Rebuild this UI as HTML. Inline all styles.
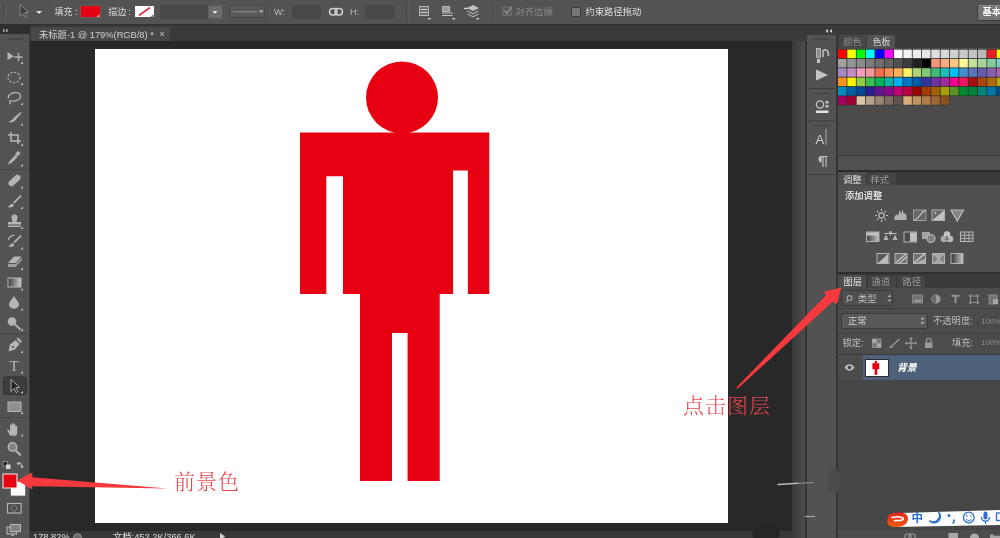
<!DOCTYPE html>
<html lang="zh-CN">
<head>
<meta charset="utf-8">
<title>Photoshop</title>
<style>
html,body{margin:0;padding:0;}
body{width:1000px;height:538px;overflow:hidden;background:#282828;position:relative;
 font-family:"Liberation Sans","Noto Sans CJK SC",sans-serif;font-size:9.3px;color:#dcdcdc;}
.a{position:absolute;}
.t{position:absolute;white-space:nowrap;line-height:12px;height:12px;}
.dim{color:#8c8c8c;}
.mid{color:#bdbdbd;}
#opt{left:0;top:0;width:1000px;height:25px;background:#535353;border-bottom:1px solid #2e2e2e;box-sizing:border-box;}
#tabs{left:0;top:25px;width:1000px;height:16px;background:#3a3a3a;}
#tool{left:0;top:25px;width:30px;height:513px;background:#535353;border-right:1px solid #3c3c3c;box-sizing:border-box;}
#toolhd{left:0;top:25px;width:30px;height:9px;background:#2f2f2f;}
#doctab{left:31px;top:26.5px;width:138.5px;height:14px;background:#484848;}
#canvas{left:95px;top:49px;width:633px;height:474px;background:#fff;}
#vscroll{left:792px;top:41px;width:15px;height:497px;background:linear-gradient(to right,#393939 0,#434343 45%,#4b4b4b 85%,#343434 90%,#343434 100%);}
#status{left:30px;top:530.5px;width:762px;height:8px;background:#383838;}
#strip{left:807px;top:35px;width:29px;height:503px;background:#525252;box-shadow:1px 0 0 #343434;}
#panels{left:837px;top:25px;width:163px;height:513px;background:#3a3a3a;}
.pb{position:absolute;left:837px;width:163px;background:#4b4b4b;}
.tabA{position:absolute;background:#535353;height:13px;}
.tabI{position:absolute;background:#434343;height:13px;}
.fld{position:absolute;background:#484848;border-radius:2px;}
.ann{font-family:"Liberation Serif","Noto Serif CJK SC",serif;font-weight:300;color:#e8454c;font-size:21px;letter-spacing:1px;line-height:24px;height:24px;}
svg{position:absolute;left:0;top:0;overflow:visible;}
</style>
</head>
<body>
<div id="root" style="position:absolute;left:0;top:0;width:1000px;height:538px;overflow:hidden;will-change:transform;">
<div class="a" id="tabs"></div>
<div class="a" id="opt"></div>
<div class="a" id="tool"></div>
<div class="a" id="toolhd"></div>
<div class="a" id="doctab"></div>
<div class="t" style="left:39px;top:28.7px;color:#cfcfcf;font-size:9.3px;">未标题-1 @ 179%(RGB/8) *</div>
<div class="t" style="left:159.5px;top:28px;color:#c8c8c8;font-size:9px;">×</div>
<div class="a" id="canvas"></div>
<div class="a" id="vscroll"></div>
<div class="a" id="status"></div>
<div class="a" id="strip"></div>
<div class="a" id="panels"></div>

<!-- options bar -->
<div class="t" style="left:54.5px;top:5.5px;font-size:9px;">填充<span style="margin-left:2.5px">:</span></div>
<div class="a" style="left:81px;top:6px;width:19px;height:11px;background:#e60012;box-shadow:0 0 0 1px #6a5a5a;"></div>
<div class="t" style="left:108.3px;top:5.5px;font-size:9px;">描边<span style="margin-left:2px">:</span></div>
<div class="a" style="left:135px;top:6px;width:19px;height:11px;background:#fdfdfd;"></div>
<div class="fld" style="left:160px;top:5px;width:48px;height:14px;"></div>
<div class="a" style="left:208px;top:4.5px;width:15px;height:14.5px;background:#6c6c6c;border-radius:0 2px 2px 0;box-shadow:inset 0 0 0 1px #5a5a5a;"></div>
<div class="a" style="left:229px;top:5px;width:36px;height:13px;background:#595959;border:1px solid #474747;border-radius:2px;box-sizing:border-box;"></div>
<div class="t mid" style="left:274px;top:5.5px;">W:</div>
<div class="fld" style="left:292px;top:5px;width:29px;height:14px;"></div>
<div class="t mid" style="left:350px;top:5.5px;">H:</div>
<div class="fld" style="left:365px;top:5px;width:29px;height:14px;"></div>
<div class="t dim" style="left:515.5px;top:5.5px;">对齐边缘</div>
<div class="a" style="left:570.5px;top:6.5px;width:10px;height:10px;background:#777;border:1px solid #3c3c3c;box-sizing:border-box;border-radius:1px;"></div>
<div class="t" style="left:585.5px;top:5.5px;">约束路径拖动</div>
<div class="a" style="left:976.5px;top:4.5px;width:30px;height:16px;background:#747474;border:1px solid #3a3a3a;border-top-color:#8a8a8a;box-sizing:border-box;border-radius:2px;"></div>
<div class="t" style="left:982.5px;top:6px;color:#fff;font-weight:bold;">基本功能</div>

<!-- right panels backgrounds -->
<div class="pb" style="top:48px;height:107px;"></div>
<div class="a" style="left:837px;top:154.5px;width:163px;height:1px;background:#3c3c3c;"></div>
<div class="a" style="left:837px;top:155.5px;width:163px;height:1px;background:#6c6c6c;"></div>
<div class="pb" style="top:156px;height:14px;background:#515151;"></div>
<div class="pb" style="top:185px;height:87px;background:#505050;"></div>
<div class="pb" style="top:288px;height:242px;background:#464646;"></div>
<div class="pb" style="top:530px;height:8px;background:#4c4c4c;"></div>
<div class="a" style="left:837px;top:170px;width:163px;height:2px;background:#2c2c2c;"></div>
<div class="a" style="left:837px;top:272px;width:163px;height:2px;background:#2e2e2e;"></div>
<div class="a" style="left:837px;top:288px;width:163px;height:66px;background:#4c4c4c;"></div>
<div class="a" style="left:837px;top:308px;width:163px;height:1px;background:#3e3e3e;"></div>
<div class="a" style="left:837px;top:332.5px;width:163px;height:1px;background:#404040;"></div>
<div class="a" style="left:837px;top:354px;width:163px;height:1px;background:#3a3a3a;"></div>
<!-- tabs -->
<div class="tabI" style="left:839px;top:35px;width:26.5px;background:#474747;"></div>
<div class="tabA" style="left:866.5px;top:35px;width:28.5px;"></div>
<div class="t dim" style="left:843.5px;top:36.2px;font-size:9px;">颜色</div>
<div class="t" style="left:872.5px;top:36.2px;color:#d4d4d4;font-size:9px;">色板</div>
<div class="tabA" style="left:838px;top:172px;width:28px;height:13px;background:#4e4e4e;"></div>
<div class="t" style="left:843px;top:173.5px;color:#e0e0e0;">调整</div>
<div class="tabI" style="left:867px;top:172.5px;width:29px;height:12.5px;background:#444;"></div>
<div class="t dim" style="left:870.5px;top:173.5px;color:#999;">样式</div>
<div class="t" style="left:845px;top:190px;color:#f0f0f0;font-weight:500;">添加调整</div>
<div class="tabA" style="left:838px;top:275px;width:28px;height:13px;background:#4d4d4d;"></div>
<div class="t" style="left:843.5px;top:276px;color:#e4e4e4;">图层</div>
<div class="tabI" style="left:867.5px;top:275.5px;width:28px;height:12.5px;background:#444;"></div><div class="tabI" style="left:897px;top:275.5px;width:28px;height:12.5px;background:#444;"></div>
<div class="t dim" style="left:871.5px;top:276px;color:#9a9a9a;">通道</div>
<div class="t dim" style="left:902.5px;top:276px;color:#9a9a9a;">路径</div>
<!-- layers controls -->
<div class="a" style="left:841px;top:290px;width:52px;height:16px;background:#4f4f4f;border:1px solid #3a3a3a;box-sizing:border-box;border-radius:2px;"></div>
<div class="t mid" style="left:858px;top:292.5px;">类型</div>
<div class="a" style="left:841px;top:313px;width:87px;height:16px;background:#585858;border:1px solid #3a3a3a;box-sizing:border-box;border-radius:2px;"></div>
<div class="t" style="left:848px;top:314.7px;color:#d0d0d0;">正常</div>
<div class="t mid" style="left:933px;top:314.7px;">不透明度:</div>
<div class="fld" style="left:977px;top:313px;width:30px;height:16px;background:#4a4a4a;"></div>
<div class="t dim" style="left:981px;top:315.5px;font-size:8px;">100%</div>
<div class="t mid" style="left:842.5px;top:336.5px;">锁定:</div>
<div class="t mid" style="left:952px;top:336.5px;">填充:</div>
<div class="fld" style="left:977px;top:334px;width:30px;height:16px;background:#4a4a4a;"></div>
<div class="t dim" style="left:981px;top:336.5px;font-size:8px;">100%</div>
<div class="a" style="left:837px;top:355px;width:163px;height:25px;background:#4d617a;"></div>
<div class="a" style="left:837px;top:355px;width:26px;height:25px;background:#4c4c4c;"></div>
<div class="a" style="left:864.5px;top:358.5px;width:24px;height:18px;background:#fff;border:1px solid #2c2c2c;box-sizing:border-box;"></div>
<div class="t" style="left:897px;top:362px;color:#fff;font-style:italic;font-weight:bold;font-size:9.8px;">背景</div>

<div class="a" style="left:835.8px;top:35px;width:2.2px;height:503px;background:#353535;"></div>
<!-- status bar -->
<div class="t" style="left:33px;top:531px;">178.82%</div>
<div class="t" style="left:113px;top:531px;">文档:452.2K/366.6K</div>

<!-- IME bar -->
<svg width="1000" height="538" viewBox="0 0 1000 538"><path d="M893 513.2L1000 510V525L893 527Z" fill="#fdfdfd"/></svg>
<div class="t" style="left:911.5px;top:511px;color:#2a6fd0;font-size:11.5px;font-weight:bold;line-height:14px;height:14px;">中</div>

<svg width="1000" height="538" viewBox="0 0 1000 538">
 <defs>
  <linearGradient id="sg" x1="0" x2="0" y1="0" y2="1"><stop offset="0" stop-color="#e3241c"/><stop offset="1" stop-color="#f05a12"/></linearGradient>
  <linearGradient id="gr1" x1="0" x2="1" y1="0" y2="0"><stop offset="0" stop-color="#3a3a3a"/><stop offset="1" stop-color="#e0e0e0"/></linearGradient>
  <linearGradient id="gr2" x1="0" x2="1" y1="0" y2="0"><stop offset="0" stop-color="#3a3a3a"/><stop offset="1" stop-color="#d8d8d8"/></linearGradient>
  <linearGradient id="gr3" x1="0" x2="1" y1="0" y2="0"><stop offset="0" stop-color="#2e2e2e"/><stop offset="1" stop-color="#dcdcdc"/></linearGradient>
 </defs>
 <!-- figure -->
 <g fill="#e60012">
  <circle cx="402" cy="97.5" r="36"/>
  <path d="M300 132.6H489.3V294H467.9V170.6H453.1V294H439.7V481H407.6V333H392V481H360V294H343V176.2H326.3V294H300Z"/>
  <rect x="872.4" y="363.2" width="6.8" height="6"/>
  <rect x="874.6" y="369" width="2.7" height="5.8"/>
  <circle cx="875.8" cy="362" r="1.3"/>
 </g>
 <g id="swatches">
<rect x="837.40" y="49.00" width="163.00" height="46.95" fill="#2e2e2e"/>
<rect x="837.40" y="95.85" width="112.26" height="9.43" fill="#2e2e2e"/>
<rect x="838.00" y="49.60" width="8.53" height="8.53" fill="#ff0000"/>
<rect x="847.33" y="49.60" width="8.53" height="8.53" fill="#ffff00"/>
<rect x="856.66" y="49.60" width="8.53" height="8.53" fill="#00ff00"/>
<rect x="865.99" y="49.60" width="8.53" height="8.53" fill="#00ffff"/>
<rect x="875.32" y="49.60" width="8.53" height="8.53" fill="#0000ff"/>
<rect x="884.65" y="49.60" width="8.53" height="8.53" fill="#ff00ff"/>
<rect x="893.98" y="49.60" width="8.53" height="8.53" fill="#ffffff"/>
<rect x="903.31" y="49.60" width="8.53" height="8.53" fill="#f3f3f3"/>
<rect x="912.64" y="49.60" width="8.53" height="8.53" fill="#ededed"/>
<rect x="921.97" y="49.60" width="8.53" height="8.53" fill="#e6e6e6"/>
<rect x="931.30" y="49.60" width="8.53" height="8.53" fill="#dfdfdf"/>
<rect x="940.63" y="49.60" width="8.53" height="8.53" fill="#d8d8d8"/>
<rect x="949.96" y="49.60" width="8.53" height="8.53" fill="#d1d1d1"/>
<rect x="959.29" y="49.60" width="8.53" height="8.53" fill="#c9c9c9"/>
<rect x="968.62" y="49.60" width="8.53" height="8.53" fill="#c2c2c2"/>
<rect x="977.95" y="49.60" width="8.53" height="8.53" fill="#b9b9b9"/>
<rect x="987.28" y="49.60" width="8.53" height="8.53" fill="#ed1c24"/>
<rect x="996.61" y="49.60" width="8.53" height="8.53" fill="#fff200"/>
<rect x="838.00" y="58.93" width="8.53" height="8.53" fill="#a0a0a0"/>
<rect x="847.33" y="58.93" width="8.53" height="8.53" fill="#959595"/>
<rect x="856.66" y="58.93" width="8.53" height="8.53" fill="#8a8a8a"/>
<rect x="865.99" y="58.93" width="8.53" height="8.53" fill="#7c7c7c"/>
<rect x="875.32" y="58.93" width="8.53" height="8.53" fill="#707070"/>
<rect x="884.65" y="58.93" width="8.53" height="8.53" fill="#616161"/>
<rect x="893.98" y="58.93" width="8.53" height="8.53" fill="#505050"/>
<rect x="903.31" y="58.93" width="8.53" height="8.53" fill="#3c3c3c"/>
<rect x="912.64" y="58.93" width="8.53" height="8.53" fill="#212121"/>
<rect x="921.97" y="58.93" width="8.53" height="8.53" fill="#000000"/>
<rect x="931.30" y="58.93" width="8.53" height="8.53" fill="#f69679"/>
<rect x="940.63" y="58.93" width="8.53" height="8.53" fill="#f9ad81"/>
<rect x="949.96" y="58.93" width="8.53" height="8.53" fill="#fdc689"/>
<rect x="959.29" y="58.93" width="8.53" height="8.53" fill="#fff799"/>
<rect x="968.62" y="58.93" width="8.53" height="8.53" fill="#c5e19c"/>
<rect x="977.95" y="58.93" width="8.53" height="8.53" fill="#a5d59d"/>
<rect x="987.28" y="58.93" width="8.53" height="8.53" fill="#84cc9e"/>
<rect x="996.61" y="58.93" width="8.53" height="8.53" fill="#7bceca"/>
<rect x="838.00" y="68.26" width="8.53" height="8.53" fill="#a388c1"/>
<rect x="847.33" y="68.26" width="8.53" height="8.53" fill="#c08ec2"/>
<rect x="856.66" y="68.26" width="8.53" height="8.53" fill="#f59ac1"/>
<rect x="865.99" y="68.26" width="8.53" height="8.53" fill="#f5989d"/>
<rect x="875.32" y="68.26" width="8.53" height="8.53" fill="#f36c4f"/>
<rect x="884.65" y="68.26" width="8.53" height="8.53" fill="#f68e56"/>
<rect x="893.98" y="68.26" width="8.53" height="8.53" fill="#fbaf5d"/>
<rect x="903.31" y="68.26" width="8.53" height="8.53" fill="#fff568"/>
<rect x="912.64" y="68.26" width="8.53" height="8.53" fill="#aed574"/>
<rect x="921.97" y="68.26" width="8.53" height="8.53" fill="#7ec878"/>
<rect x="931.30" y="68.26" width="8.53" height="8.53" fill="#3dbb7a"/>
<rect x="940.63" y="68.26" width="8.53" height="8.53" fill="#1cbeb7"/>
<rect x="949.96" y="68.26" width="8.53" height="8.53" fill="#00bff4"/>
<rect x="959.29" y="68.26" width="8.53" height="8.53" fill="#458ecd"/>
<rect x="968.62" y="68.26" width="8.53" height="8.53" fill="#5776bc"/>
<rect x="977.95" y="68.26" width="8.53" height="8.53" fill="#625eac"/>
<rect x="987.28" y="68.26" width="8.53" height="8.53" fill="#8861ac"/>
<rect x="996.61" y="68.26" width="8.53" height="8.53" fill="#aa65ad"/>
<rect x="838.00" y="77.59" width="8.53" height="8.53" fill="#f8951d"/>
<rect x="847.33" y="77.59" width="8.53" height="8.53" fill="#fff200"/>
<rect x="856.66" y="77.59" width="8.53" height="8.53" fill="#92ce41"/>
<rect x="865.99" y="77.59" width="8.53" height="8.53" fill="#3cbf4e"/>
<rect x="875.32" y="77.59" width="8.53" height="8.53" fill="#00b156"/>
<rect x="884.65" y="77.59" width="8.53" height="8.53" fill="#00b4a7"/>
<rect x="893.98" y="77.59" width="8.53" height="8.53" fill="#00b0f1"/>
<rect x="903.31" y="77.59" width="8.53" height="8.53" fill="#0077c5"/>
<rect x="912.64" y="77.59" width="8.53" height="8.53" fill="#005ab1"/>
<rect x="921.97" y="77.59" width="8.53" height="8.53" fill="#32359f"/>
<rect x="931.30" y="77.59" width="8.53" height="8.53" fill="#6f319e"/>
<rect x="940.63" y="77.59" width="8.53" height="8.53" fill="#9f2a9b"/>
<rect x="949.96" y="77.59" width="8.53" height="8.53" fill="#ef008e"/>
<rect x="959.29" y="77.59" width="8.53" height="8.53" fill="#f0145c"/>
<rect x="968.62" y="77.59" width="8.53" height="8.53" fill="#aa0c10"/>
<rect x="977.95" y="77.59" width="8.53" height="8.53" fill="#ac460e"/>
<rect x="987.28" y="77.59" width="8.53" height="8.53" fill="#ae690a"/>
<rect x="996.61" y="77.59" width="8.53" height="8.53" fill="#b6aa00"/>
<rect x="838.00" y="86.92" width="8.53" height="8.53" fill="#008cc1"/>
<rect x="847.33" y="86.92" width="8.53" height="8.53" fill="#0061a6"/>
<rect x="856.66" y="86.92" width="8.53" height="8.53" fill="#00479a"/>
<rect x="865.99" y="86.92" width="8.53" height="8.53" fill="#271d8f"/>
<rect x="875.32" y="86.92" width="8.53" height="8.53" fill="#62148d"/>
<rect x="884.65" y="86.92" width="8.53" height="8.53" fill="#8e068a"/>
<rect x="893.98" y="86.92" width="8.53" height="8.53" fill="#be0070"/>
<rect x="903.31" y="86.92" width="8.53" height="8.53" fill="#be0044"/>
<rect x="912.64" y="86.92" width="8.53" height="8.53" fill="#a10000"/>
<rect x="921.97" y="86.92" width="8.53" height="8.53" fill="#a23d00"/>
<rect x="931.30" y="86.92" width="8.53" height="8.53" fill="#a46000"/>
<rect x="940.63" y="86.92" width="8.53" height="8.53" fill="#a89f00"/>
<rect x="949.96" y="86.92" width="8.53" height="8.53" fill="#5b9022"/>
<rect x="959.29" y="86.92" width="8.53" height="8.53" fill="#00892f"/>
<rect x="968.62" y="86.92" width="8.53" height="8.53" fill="#008439"/>
<rect x="977.95" y="86.92" width="8.53" height="8.53" fill="#00857a"/>
<rect x="987.28" y="86.92" width="8.53" height="8.53" fill="#0077a6"/>
<rect x="996.61" y="86.92" width="8.53" height="8.53" fill="#004d8e"/>
<rect x="838.00" y="96.25" width="8.53" height="8.53" fill="#a2005c"/>
<rect x="847.33" y="96.25" width="8.53" height="8.53" fill="#a10032"/>
<rect x="856.66" y="96.25" width="8.53" height="8.53" fill="#dbc4a8"/>
<rect x="865.99" y="96.25" width="8.53" height="8.53" fill="#baa38e"/>
<rect x="875.32" y="96.25" width="8.53" height="8.53" fill="#9c8676"/>
<rect x="884.65" y="96.25" width="8.53" height="8.53" fill="#7f6d64"/>
<rect x="893.98" y="96.25" width="8.53" height="8.53" fill="#615551"/>
<rect x="903.31" y="96.25" width="8.53" height="8.53" fill="#daac78"/>
<rect x="912.64" y="96.25" width="8.53" height="8.53" fill="#c39261"/>
<rect x="921.97" y="96.25" width="8.53" height="8.53" fill="#b07b48"/>
<rect x="931.30" y="96.25" width="8.53" height="8.53" fill="#9d6630"/>
<rect x="940.63" y="96.25" width="8.53" height="8.53" fill="#8b531c"/>
 </g>
 <!-- ===== left toolbar icons ===== -->
 <g id="tb" fill="#c6c6c6" stroke="none" opacity="0.85">
  <!-- grips / separators -->
  <rect x="3" y="29" width="1.6" height="3" fill="#bdbdbd"/><rect x="6" y="29" width="1.6" height="3" fill="#bdbdbd"/>
  <rect x="7" y="38.5" width="16" height="1" fill="#3a3a3a"/>
  <rect x="0" y="169" width="29" height="1" fill="#444"/>
  <rect x="0" y="333.5" width="29" height="1" fill="#444"/>
  <rect x="0" y="417" width="29" height="1" fill="#444"/>
  <!-- selected tool box -->
  <rect x="3.5" y="377" width="23" height="17.5" rx="2" fill="#3a3a3a" stroke="#2c2c2c" stroke-width="1"/>
  <!-- small flyout triangles -->
  <g fill="#d8d8d8">
   <path d="M23 61.5v2.5h-2.5z"/><path d="M23 82.5v2.5h-2.5z"/><path d="M23 102.5v2.5h-2.5z"/><path d="M23 123v2.500h-2.500z"/>
   <path d="M23 143.500v2.500h-2.500z"/><path d="M23 164v2.500h-2.500z"/><path d="M23 186v2.500h-2.500z"/><path d="M23 206.500v2.500h-2.500z"/>
   <path d="M23 226.500v2.500h-2.500z"/><path d="M23 247v2.500h-2.500z"/><path d="M23 267.500v2.500h-2.500z"/><path d="M23 288v2.500h-2.500z"/>
   <path d="M23 308v2.500h-2.500z"/><path d="M23 328.500v2.500h-2.500z"/><path d="M23 350.500v2.500h-2.500z"/><path d="M23 371v2.500h-2.500z"/>
   <path d="M23 391v2.500h-2.500z"/><path d="M23 411.500v2.500h-2.500z"/><path d="M23 434v2.500h-2.500z"/><path d="M13.500 533.500v2.500h-2.500z"/>
  </g>
  <!-- 1 move -->
  <path d="M7.500 52l6.500 4.600-6.500 3.400z"/>
  <path d="M18.500 53v8M14.500 57h8" stroke="#c6c6c6" stroke-width="1.400" fill="none"/>
  <!-- 2 elliptical marquee -->
  <ellipse cx="14" cy="77.500" rx="6" ry="5.200" fill="none" stroke="#bdbdbd" stroke-width="1.300" stroke-dasharray="2.200 1.500"/>
  <!-- 3 lasso -->
  <path d="M8.500 98.500c-1-3.500 3-6 7-6s6 2.500 4.500 5.500-7 4-9.500 2.500c-1.500 1-1 3 0.500 3.500" fill="none" stroke="#c0c0c0" stroke-width="1.400"/>
  <!-- 4 quick selection -->
  <path d="M8 122c2-0.500 4.500-2 5.500-4l7-6 1 1-6 7c-1.500 2-5 3-7.500 2z"/>
  <!-- 5 crop -->
  <path d="M11 132v9h10M8 135h10v9" fill="none" stroke="#c8c8c8" stroke-width="1.500"/>
  <!-- 6 eyedropper -->
  <path d="M8 164.500l1.500-3.500 6-6 2 2-6 6z"/><path d="M15 154l2.500-2.500c1-1 3.500 1.500 2.500 2.500l-2.500 2.500z"/>
  <!-- 7 healing -->
  <rect x="-7" y="-3" width="14" height="6" rx="3" transform="translate(14.500 180.500) rotate(-42)"/>
  <!-- 8 brush -->
  <path d="M7.500 207c1.500-0.200 2.500-2.800 4.500-3.500l2 2c-1 2-4 2.500-6.500 1.500z"/><path d="M13 202.500l7.500-7.500 1.200 1.200-7.500 7.500z"/>
  <!-- 9 stamp -->
  <path d="M12 219.500c-1.500-2.500 0-5 2.500-5s4 2.500 2.500 5l-0.500 2.500h4.500v2.500h-13v-2.500h4.500z"/><rect x="8" y="225.500" width="13" height="1.500"/>
  <!-- 10 history brush -->
  <path d="M8 246.500c1.500-0.200 2.500-2.800 4.500-3.500l2 2c-1 2-4 2.500-6.500 1.500z"/><path d="M13.500 242l7-7 1.200 1.200-7 7z"/>
  <path d="M8.500 240c0-3 3-5 6-4.500" fill="none" stroke="#c6c6c6" stroke-width="1.200"/>
  <!-- 11 eraser -->
  <path d="M8 263l6-6.500h7.500l-6 6.500z"/><path d="M8 264h7.500l6-6.500v3l-6 6.500h-7.500z" fill="#a9a9a9"/>
  <!-- 12 gradient -->
  <rect x="8" y="278" width="13" height="9" fill="url(#gr1)" stroke="#c9c9c9" stroke-width="1"/>
  <!-- 13 blur -->
  <path d="M14 296c2.500 4 5 6 5 8.500a5 4.200 0 0 1-10 0c0-2.500 2.500-4.500 5-8.500z"/>
  <!-- 14 dodge -->
  <circle cx="12" cy="321.500" r="4.300"/><path d="M15 324.500l5.500 5" stroke="#c6c6c6" stroke-width="1.800"/>
  <!-- 15 pen -->
  <path d="M8.500 351.500l1.500-7 5.500-4.500 4 4-4.500 5.500z"/><path d="M16.500 339l1.500-1.500 4 4-1.500 1.500z"/>
  <circle cx="13" cy="347" r="1.100" fill="#535353"/>
  <text x="9.500" y="371" font-family="'Liberation Serif',serif" font-size="15" fill="#c8c8c8">T</text>
  <!-- 17 path select arrow -->
  <path d="M11 379.500v12l3-3 2 4 1.800-0.900-2-4h4z" fill="#1c1c1c" stroke="#c8c8c8" stroke-width="0.900"/>
  <!-- 18 rectangle -->
  <rect x="8" y="402" width="13" height="9.500" fill="#9a9a9a" stroke="#c4c4c4" stroke-width="1"/>
  <!-- 19 hand -->
  <path d="M10 435.500c-1-2-2-4-3-5.500 1-1 2 0 3 1.500v-6c0-1.200 1.800-1.200 1.800 0v-1.500c0-1.200 1.800-1.200 1.800 0v1c0-1.200 1.800-1.200 1.800 0v1.500c0-1.200 1.800-1 1.800 0.200v5c0 2-0.700 3-1.200 4z"/>
  <!-- 20 zoom -->
  <circle cx="12.500" cy="447" r="4.200" fill="#8a8a8a" stroke="#c8c8c8" stroke-width="1.500"/><path d="M15.800 450.500l5 5" stroke="#c8c8c8" stroke-width="2"/>
  <!-- mini default / swap -->
  <rect x="3" y="461.500" width="4.500" height="4.500" fill="#1d1d1d" stroke="#ccc" stroke-width="0.600"/><rect x="6" y="464.500" width="4.500" height="4.500" fill="#eee"/>
  <path d="M17.500 463.500c2.500-1 4.500 0.500 4.500 3.500" fill="none" stroke="#cfcfcf" stroke-width="1.100"/><path d="M16.500 463.500l2.500-2v4z"/><path d="M22 468.500l-2-2.300h4z"/>
  <!-- quick mask -->
  <rect x="7.500" y="503.500" width="13.500" height="9.500" fill="#4a4a4a" stroke="#c4c4c4" stroke-width="1.200"/><circle cx="14.200" cy="508.200" r="2.800" fill="none" stroke="#c4c4c4" stroke-width="1" stroke-dasharray="1.500 1"/>
  <!-- screen mode -->
  <rect x="7" y="527" width="9.500" height="7" fill="#6a6a6a" stroke="#c4c4c4" stroke-width="1.100"/><rect x="10.500" y="524.500" width="10" height="7" fill="#8a8a8a" stroke="#c4c4c4" stroke-width="1.100"/>
 </g>
 <g id="fgbg">
  <!-- bg / fg swatches -->
  <rect x="10.500" y="481.500" width="15" height="14.500" fill="#fdfdfd" stroke="#6a6a6a" stroke-width="0.800"/>
  <rect x="3" y="474" width="14" height="14" fill="#e60012" stroke="#f2dede" stroke-width="1.100"/>
 </g>
 <!-- ===== options bar icons ===== -->
 <g id="ob">
  <rect x="3" y="3" width="1" height="19" fill="#484848"/><rect x="5" y="3" width="1" height="19" fill="#5c5c5c"/>
  <path d="M20 4.500v12l3-3 2.200 4.500 1.800-0.900-2.200-4.500h4z" fill="#3f3f3f" stroke="#8e8e8e" stroke-width="0.900"/>
  <path d="M36 11h6l-3 3z" fill="#e0e0e0"/>
  <path d="M139 15.500l11-8" stroke="#d8343c" stroke-width="1.600"/>
  <path d="M153.500 14v3h-3z" fill="#777"/><path d="M99.500 14v3h-3z" fill="#e9a0a0"/>
  <path d="M212.500 11h5l-2.500 2.800z" fill="#f0f0f0"/>
  <path d="M232.500 11.800h25" stroke="#8f8f8f" stroke-width="1"/>
  <path d="M259 10.500h4.500l-2.250 2.600z" fill="#b9b9b9"/>
  <rect x="267.500" y="2" width="1" height="21" fill="#454545"/><rect x="268.500" y="2" width="1" height="21" fill="#5d5d5d"/>
  <g fill="none" stroke="#cfcfcf" stroke-width="1.500"><rect x="329.500" y="8.500" width="7.500" height="6.500" rx="3.200"/><rect x="335" y="8.500" width="7.500" height="6.500" rx="3.200"/></g>
  <rect x="406.500" y="2" width="1" height="21" fill="#484848"/><rect x="407.500" y="2" width="1" height="21" fill="#5b5b5b"/>
  <!-- path ops -->
  <rect x="419.500" y="6.500" width="9" height="9" fill="#6b6b6b" stroke="#b5b5b5" stroke-width="1"/><path d="M421 9.500h6M421 12.500h6" stroke="#c8c8c8" stroke-width="1"/>
  <path d="M427.500 18h3.500l-1.750 2z" fill="#cfcfcf"/>
  <rect x="442.500" y="6.500" width="7" height="5" fill="#9b9b9b" stroke="#b5b5b5" stroke-width="1"/><path d="M442 13h10.500M442 15.500h10.500" stroke="#c4c4c4" stroke-width="1.200"/>
  <path d="M452 18h3.500l-1.750 2z" fill="#cfcfcf"/>
  <path d="M473 5l6 3-6 3-6-3z" fill="#c2c2c2"/><path d="M467.500 11l5.500 2.800 5.500-2.800M467.500 14l5.500 2.800 5.500-2.800" fill="none" stroke="#a8a8a8" stroke-width="1.200"/>
  <path d="M464 8.500h4" stroke="#cfcfcf" stroke-width="1.400"/><path d="M476 18h3.500l-1.750 2z" fill="#cfcfcf"/>
  <rect x="493" y="2" width="1" height="21" fill="#484848"/><rect x="494" y="2" width="1" height="21" fill="#5b5b5b"/>
  <rect x="503" y="7" width="8.500" height="8.500" fill="#5a5a5a" stroke="#6f6f6f" stroke-width="1"/><path d="M504.500 10.500l2.500 3 4.500-6.500" fill="none" stroke="#8d8d8d" stroke-width="1.500"/>
  <rect x="562.500" y="2" width="1" height="21" fill="#4a4a4a"/><rect x="563.500" y="2" width="1" height="21" fill="#5a5a5a"/>
 </g>
 <!-- ===== right strip icons ===== -->
 <g id="rs" fill="#c4c4c4">
  <path d="M828 29l-2.500 2 2.500 2zM832 29l-2.500 2 2.500 2z" fill="#d0d0d0"/>
  <rect x="813" y="38.500" width="17" height="1" fill="#3c3c3c"/>
  <rect x="816.500" y="48.500" width="4" height="9" fill="#8e8e8e" stroke="#c4c4c4" stroke-width="0.800"/><rect x="817" y="59" width="3" height="4" />
  <path d="M823 57v-5c0-3 4-3 5 0l0.500 4" fill="none" stroke="#c4c4c4" stroke-width="1.500"/>
  <path d="M816 69.500l12 5.500-12 5.500z"/>
  <rect x="808" y="88" width="27" height="1" fill="#3c3c3c"/><rect x="814" y="93" width="15" height="1" fill="#404040"/>
  <circle cx="820" cy="104.500" r="3.600" fill="none" stroke="#c4c4c4" stroke-width="1.300"/><rect x="825.500" y="101" width="3" height="2.500"/><rect x="825.500" y="105" width="3" height="2.500"/>
  <rect x="816" y="110.500" width="12.500" height="2.500" fill="#e0e0e0"/>
  <rect x="808" y="120.500" width="27" height="1" fill="#3c3c3c"/><rect x="814" y="125" width="15" height="1" fill="#404040"/>
  <rect x="825.500" y="129" width="1" height="16" fill="#a8a8a8"/>
  <text x="815.500" y="144" font-family="'Liberation Sans',sans-serif" font-size="13" fill="#cdcdcd">A</text>
  <path d="M820.500 156.500h7M823 156.500v10.500M826 156.500v10.500" stroke="#c8c8c8" stroke-width="1.100" fill="none"/><path d="M821.500 156c-4 0-4 6.500 0 6.500z" />
  <rect x="808" y="174" width="27" height="1" fill="#3c3c3c"/>
 </g>
 <!-- ===== panel icons ===== -->
 <g id="pi" fill="#c4c4c4" opacity="0.85">
  <!-- adjustments row1 -->
  <circle cx="881.500" cy="215.500" r="2.700" fill="none" stroke="#d0d0d0" stroke-width="1.200"/>
  <path d="M881.500 209v2M881.500 220v2M875 215.500h2M886 215.500h2M877 211l1.400 1.400M884.600 218.600l1.400 1.400M877 220l1.400-1.400M884.600 212.400l1.400-1.400" stroke="#d0d0d0" stroke-width="1.200"/>
  <path d="M894.500 220v-3l2-3 1.500 2 1.500-6 1.500 4 1.500-4.500 1.500 5 1.500-2 1 4v3.500z"/>
  <rect x="913.500" y="210" width="12.500" height="10.500" fill="#6a6a6a" stroke="#b4b4b4" stroke-width="0.900"/><path d="M914 220c5 0 7-9.500 12-9.500" fill="none" stroke="#e6e6e6" stroke-width="1.200"/>
  <rect x="932" y="210" width="12.500" height="10.500" fill="#6a6a6a" stroke="#c4c4c4" stroke-width="1"/><path d="M932.500 220l11.500-9.500v9.500z" fill="#d6d6d6"/><path d="M934 213h3M935.500 211.500v3M939.500 218.500h3" stroke="#d0d0d0" stroke-width="0.800"/>
  <path d="M951 210h12.500l-6.250 11z" fill="#8d8d8d" stroke="#cdcdcd" stroke-width="1.200"/>
  <!-- row2 -->
  <rect x="866.500" y="232" width="12.500" height="9.500" fill="url(#gr2)" stroke="#c4c4c4" stroke-width="1"/><rect x="867" y="232.500" width="11.500" height="3" fill="#d5d5d5"/>
  <path d="M884.500 233.500h12M890.500 231.500v4" stroke="#d0d0d0" stroke-width="1.200"/><path d="M883.500 240l2.500-5.500 2.500 5.500zM892.500 240l2.500-5.500 2.500 5.500z"/><circle cx="890.500" cy="232.500" r="1.500"/>
  <rect x="904" y="232" width="12.500" height="10" fill="#4a4a4a" stroke="#c8c8c8" stroke-width="1"/><rect x="910" y="232.500" width="6" height="9" fill="#d4d4d4"/>
  <rect x="922" y="232" width="8" height="7" fill="#b4b4b4"/><circle cx="931" cy="238.500" r="4" fill="#8a8a8a" stroke="#c8c8c8" stroke-width="1.200"/>
  <circle cx="947" cy="234.500" r="3.300" fill="#d8d8d8"/><circle cx="944" cy="239" r="3.300" fill="#c0c0c0"/><circle cx="950" cy="239" r="3.300" fill="#cdcdcd"/><path d="M947 236v2.500l-2 1.500M947 238.500l2 1.500" stroke="#4a4a4a" stroke-width="1" fill="none"/>
  <rect x="960.500" y="232" width="12.500" height="9.500" fill="#5a5a5a" stroke="#c8c8c8" stroke-width="1"/><path d="M960.500 235.200h12.500M960.500 238.400h12.500M964.700 232v9.500M968.900 232v9.500" stroke="#c8c8c8" stroke-width="0.900"/>
  <!-- row3 -->
  <rect x="877" y="253.500" width="12" height="10" fill="#5a5a5a" stroke="#c4c4c4" stroke-width="1"/><path d="M878 263l10-9v9z" fill="#cfcfcf"/>
  <rect x="895" y="253.500" width="12" height="10" fill="#787878" stroke="#c4c4c4" stroke-width="1"/><path d="M895.500 263l11-9.500M899 263.500l8-7" stroke="#d2d2d2" stroke-width="1.500"/>
  <rect x="913.500" y="253.500" width="12" height="10" fill="#787878" stroke="#c4c4c4" stroke-width="1"/><path d="M914 263l11-9.500" stroke="#e0e0e0" stroke-width="1.500"/><path d="M914 263.500h11.500v-5z" fill="#bcbcbc"/>
  <rect x="932.500" y="253.500" width="12" height="10" fill="#8c8c8c" stroke="#c4c4c4" stroke-width="1"/><path d="M933 254l5.500 5 5.500-5M933 263.500l5.500-4.500 5.500 4.500" fill="#b5b5b5" stroke="#cfcfcf" stroke-width="0.800"/>
  <rect x="951" y="253.500" width="12" height="10" fill="url(#gr3)" stroke="#c4c4c4" stroke-width="1"/>
  <!-- layers: filter row -->
  <circle cx="849.500" cy="298" r="2.400" fill="none" stroke="#b5b5b5" stroke-width="1.100"/><path d="M848 300l-2 2.500" stroke="#b5b5b5" stroke-width="1.200"/>
  <path d="M887.500 297l2-2.500 2 2.500zM887.500 299.500l2 2.500 2-2.500z" fill="#b5b5b5"/>
  <g fill="#8f8f8f">
   <rect x="912.500" y="295" width="10" height="8" fill="#777" stroke="#9a9a9a" stroke-width="0.900"/><path d="M913.500 302l3-3.500 2 2 1.500-1.500 2 3z" fill="#aaa"/>
   <circle cx="936" cy="299" r="4.200" fill="#6e6e6e" stroke="#9a9a9a" stroke-width="0.900"/><path d="M936 294.800a4.200 4.200 0 0 1 0 8.400z" fill="#a5a5a5"/>
   <path d="M951.500 294.800h8v2h-3v6.500h-2v-6.500h-3z" fill="#a0a0a0"/>
   <rect x="970.500" y="296" width="7" height="6.500" fill="none" stroke="#9d9d9d" stroke-width="1"/><rect x="969" y="294.500" width="2.500" height="2.500"/><rect x="976.500" y="294.500" width="2.500" height="2.500"/><rect x="969" y="301.500" width="2.500" height="2.500"/><rect x="976.500" y="301.500" width="2.500" height="2.500"/>
   <rect x="989" y="295" width="8" height="9" fill="#7a7a7a" stroke="#9d9d9d" stroke-width="0.900"/><rect x="993" y="299" width="5" height="5" fill="#b5b5b5"/>
  </g>
  <path d="M920.500 319.500l2-2.500 2 2.500zM920.500 322l2 2.500 2-2.500z" fill="#c0c0c0"/>
  <!-- lock row -->
  <g fill="#a9a9a9">
   <rect x="872.500" y="339" width="8.500" height="8.500" fill="#7c7c7c" stroke="#a9a9a9" stroke-width="0.800"/><path d="M872.500 339h4.250v4.250h-4.250zM876.750 343.250h4.250v4.250h-4.250z" fill="#b9b9b9"/>
   <path d="M888.500 347.500c1.500-0.200 2.200-2 3.500-2.500l1.500 1.500c-0.800 1.500-3 1.800-5 1z"/><path d="M892.500 344.500l6.500-6 1 1-6.500 6z"/>
   <path d="M911 338.500v9.500M906.200 343.200h9.600" stroke="#a9a9a9" stroke-width="1.200"/><path d="M911 337l1.800 2.200h-3.600zM911 349.500l1.800-2.200h-3.600zM904.800 343.200l2.200-1.800v3.600zM917.200 343.200l-2.200-1.800v3.600z"/>
   <rect x="925" y="342.500" width="7.500" height="5.500"/><path d="M926.500 342.500v-2c0-3 4.500-3 4.500 0v2" fill="none" stroke="#a9a9a9" stroke-width="1.200"/>
  </g>
  <!-- eye -->
  <path d="M844.500 367.500c2.500-4.200 7.500-4.200 10 0-2.500 4.200-7.500 4.200-10 0z" fill="#cfcfcf"/><circle cx="849.500" cy="367.500" r="1.800" fill="#444"/>
  <!-- bottom bar icons (clipped) -->
  <g fill="none" stroke="#a8a8a8" stroke-width="1.200">
   <rect x="905" y="534" width="6" height="6" rx="2"/><rect x="909" y="534" width="6" height="6" rx="2"/>
   <rect x="948.500" y="533" width="9.500" height="8" fill="#b8b8b8" stroke="none"/>
   <circle cx="974.500" cy="538" r="4.500" fill="#bdbdbd" stroke="none"/>
   <path d="M990 541v-6.500h3l1 1.200h6v5.300z" fill="#b5b5b5" stroke="none"/>
  </g>
 </g>
 <!-- ===== IME bar icons ===== -->
 <g id="ime">
  <path d="M889 514.500c4-2.500 13-2.800 16.500-0.500 3 2 3 6 1.500 8.500-2 3.500-8 5-13 4.500-3.500-0.400-6-1.500-6.500-3.500-0.500-3 0-7 1.500-9z" fill="url(#sg)"/>
  <path d="M892 517.500c4-1 8-1 10.500 0.300 1.500 1 0.500 2.300-2 2.500l-6 0.300" fill="none" stroke="#fff" stroke-width="1.700" stroke-linecap="round"/>
  <path d="M938.500 512a6.300 6.300 0 1 1-9 8.800a6.500 6.500 0 0 0 9-8.800z" fill="#2b6fd0" stroke="#2b6fd0" stroke-width="1.2" stroke-linejoin="round"/>
  <circle cx="949" cy="515.500" r="1.500" fill="#2b6fd0"/><path d="M953.500 519.500c1 1.500 0.500 3-1 4" stroke="#2b6fd0" stroke-width="1.500" fill="none"/>
  <circle cx="968.800" cy="517.500" r="5.300" fill="none" stroke="#2b6fd0" stroke-width="1.300"/><circle cx="966.800" cy="516" r="0.800" fill="#2b6fd0"/><circle cx="970.800" cy="516" r="0.800" fill="#2b6fd0"/><path d="M966 519.200c1.500 1.800 4 1.800 5.600 0" fill="none" stroke="#2b6fd0" stroke-width="1"/>
  <rect x="983.500" y="511.500" width="4" height="8" rx="2" fill="#2b6fd0"/><path d="M981.500 517c0 5.500 8 5.500 8 0M985.500 521.500v2.500" fill="none" stroke="#2b6fd0" stroke-width="1.200"/>
  <rect x="996.500" y="513" width="6" height="7.500" fill="none" stroke="#2b6fd0" stroke-width="1.300"/>
 </g>
 <circle cx="77.500" cy="537.500" r="3.800" fill="#6a6a6a" stroke="#9a9a9a" stroke-width="1"/>
 <path d="M220 533l5 3.500-5 3.500z" fill="#d0d0d0"/>
 <rect x="70" y="531" width="1" height="7" fill="#2e2e2e"/><rect x="228" y="531" width="1" height="7" fill="#2e2e2e"/>
 <!-- artefacts -->
 <ellipse cx="833.500" cy="481" rx="6" ry="13.500" fill="#4b4b4b"/>
 <path d="M778 484.500l20-1.200" stroke="#b8b8b8" stroke-width="1.500" stroke-linecap="round"/><path d="M798 483.300l16-0.800" stroke="#8d8d8d" stroke-width="1.200"/>
 <path d="M805 516.500h10" stroke="#a8a8a8" stroke-width="1.200"/>
 <ellipse cx="766" cy="534" rx="14" ry="9" fill="#262626"/>

 <!-- arrows -->
 <g fill="#f5393c">
  <path d="M17.3 480.5L32.4 472.2L32.3 477.3L167.7 488.6L32.3 486.2L32.4 489.6Z"/>
  <path d="M841.3 287.4L836.8 304.2L832.6 301.8L737.8 388.6L736.4 387.4L826.2 295L823.8 291.8Z"/>
 </g>
</svg>
<div class="t ann" style="left:174px;top:469.8px;">前景色</div>
<div class="t ann" style="left:683px;top:394px;">点击图层</div>
</div>
</body>
</html>
